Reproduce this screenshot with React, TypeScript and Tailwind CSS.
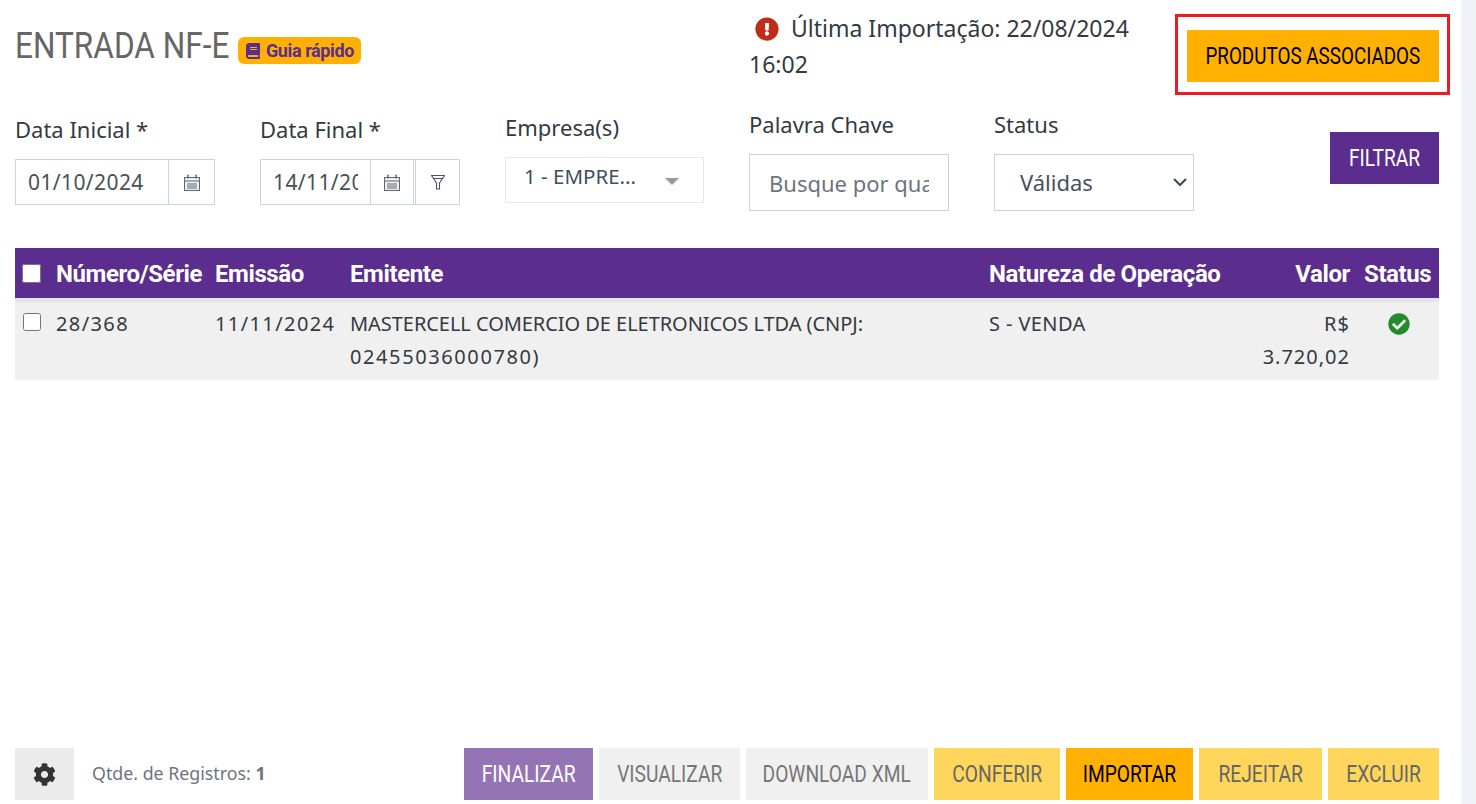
import { FaBook, FaCheckCircle, FaCog, FaExclamationCircle } from 'react-icons/fa';

const din = "font-['Roboto',sans-serif]";

function CalendarIcon() {
  return (
    <svg width="16" height="17" viewBox="0 0 16 17" fill="none" stroke="#5f6872" strokeWidth="1">
      <rect x="0.5" y="3.5" width="15" height="13" fill="#eef0f2" />
      <path d="M0.5 7h15M3 10h10M3 12h10M3 14h10" />
      <path d="M4 0.5v4M12 0.5v4" strokeWidth="1.5" />
    </svg>
  );
}

function FunnelIcon() {
  return (
    <svg width="14" height="16" viewBox="0 0 14 16" fill="none" stroke="#4b5560" strokeWidth="1.1">
      <path d="M0.5 1.5h13L8.5 9v6H5.5V9z" />
      <path d="M2.5 4.5h9" />
    </svg>
  );
}

function Label({ children }: { children: React.ReactNode }) {
  return <label className="block text-[22px] leading-[28px] text-[#333a40]">{children}</label>;
}

// texto condensado dos botoes
function Squeezed({ children }: { children: React.ReactNode }) {
  return <span className="inline-block scale-x-[0.8] whitespace-nowrap">{children}</span>;
}

function FooterButton({ children, cls }: { children: React.ReactNode; cls: string }) {
  return (
    <button className={`flex h-[52px] items-center justify-center text-[24px] ${din} ${cls}`}>
      <Squeezed>{children}</Squeezed>
    </button>
  );
}

export default function App() {
  return (
    <div className="flex h-[804px] w-[1476px] overflow-hidden bg-white font-['Noto_Sans',sans-serif]">
      <main className="flex w-[1461px] flex-col pl-[15px] pr-[11px]">
        {/* topo */}
        <div className="flex h-[96px] shrink-0 items-start">
          <div className="flex w-[734px] shrink-0 items-center gap-[9px] pt-[28px]">
            <h1 className={`w-[214px] whitespace-nowrap text-[36px] leading-[36px] text-[#666] ${din}`}>
              <span className="inline-block origin-left scale-x-[0.877]">ENTRADA NF-E</span>
            </h1>
            <span className="mt-[9px] flex h-[27px] w-[123px] items-center gap-[5px] rounded-[6px] bg-[#ffb000] pl-[7px] text-[18px] font-bold text-[#5b2d8e]">
              <FaBook size={16} />
              <span className={`tracking-[-0.4px] ${din}`}>Guia rápido</span>
            </span>
          </div>
          <div className="w-[426px] shrink-0 pt-[10px] text-[23px] leading-[36px] text-[#333a40]">
            <FaExclamationCircle className="mb-[4px] ml-[6px] mr-[12px] inline" size={24} color="#c02c18" />
            Última Importação: 22/08/2024 16:02
          </div>
          <div className="mt-[14px] shrink-0 border-[3px] border-[#ed1c24] pb-[10px] pl-[9px] pr-[8px] pt-[13px]">
            <button className={`flex h-[52px] w-[252px] items-center justify-center bg-[#ffb000] text-[24px] text-black ${din}`}>
              <span className="inline-block scale-x-[0.785] whitespace-nowrap">PRODUTOS ASSOCIADOS</span>
            </button>
          </div>
        </div>

        {/* filtros */}
        <div className="flex h-[152px] shrink-0 items-start">
          <div className="w-[245px] pt-[19px]">
            <Label>Data Inicial *</Label>
            <div className="mt-[16px] flex h-[46px] w-[200px] border border-[#cdd1d8]">
              <input readOnly value="01/10/2024" className="w-[152px] px-[12px] pt-[1px] text-[21px] tracking-[0.4px] text-[#495057] outline-none" />
              <span className="flex w-[46px] items-center justify-center border-l border-[#cdd1d8]">
                <CalendarIcon />
              </span>
            </div>
          </div>
          <div className="w-[245px] pt-[19px]">
            <Label>Data Final *</Label>
            <div className="mt-[16px] flex h-[46px] w-[200px] border border-[#cdd1d8]">
              <input readOnly value="14/11/2024" className="w-[109px] px-[12px] pt-[1px] text-[21px] tracking-[0.4px] text-[#495057] outline-none" />
              <span className="flex w-[44px] items-center justify-center border-x border-[#cdd1d8]">
                <CalendarIcon />
              </span>
              <span className="ml-[1px] flex flex-1 items-center justify-center border-l border-[#cdd1d8]">
                <FunnelIcon />
              </span>
            </div>
          </div>
          <div className="w-[244px] pt-[17px]">
            <Label>Empresa(s)</Label>
            <div className="mt-[16px] flex h-[46px] w-[199px] items-center border border-[#e6e8ea] pl-[18px] text-[20.5px] text-[#3e5060]">
              <span className="w-[140px] -translate-y-[4px]">1 - EMPRE...</span>
              <span className="ml-[1px] mt-[3px] border-x-[7px] border-t-[7px] border-x-transparent border-t-[#999]" />
            </div>
          </div>
          <div className="w-[245px] pt-[14px]">
            <Label>Palavra Chave</Label>
            <input
              placeholder="Busque por qualquer coisa"
              className="mt-[16px] h-[57px] w-[200px] border border-[#cdd1d8] px-[19px] text-[22px] outline-none placeholder:text-[#6c757d]"
            />
          </div>
          <div className="w-[336px] pt-[14px]">
            <Label>Status</Label>
            <div className="relative mt-[16px] w-[200px]">
              <select className="h-[57px] w-full appearance-none border border-[#cdd1d8] bg-white pl-[25px] text-[22px] text-[#495057] outline-none">
                <option>Válidas</option>
              </select>
              <svg className="pointer-events-none absolute right-[7px] top-[24px]" width="14" height="9" viewBox="0 0 14 9" fill="none" stroke="#3f474e" strokeWidth="2">
                <path d="M1 1l6 6 6-6" />
              </svg>
            </div>
          </div>
          <button className={`mt-[36px] flex h-[52px] w-[109px] items-center justify-center bg-[#5b2d8e] text-[24px] text-white ${din}`}>
            <Squeezed>FILTRAR</Squeezed>
          </button>
        </div>

        {/* tabela */}
        <table className="w-[1424px] shrink-0 table-fixed border-collapse text-[20px] text-[#333a40]">
          <colgroup>
            <col className="w-[41px]" />
            <col className="w-[159px]" />
            <col className="w-[135px]" />
            <col className="w-[639px]" />
            <col className="w-[262px]" />
            <col className="w-[113px]" />
            <col className="w-[75px]" />
          </colgroup>
          <thead>
            <tr className={`h-[52px] bg-[#5b2d8e] text-left text-[24px] font-bold tracking-[-0.4px] text-white ${din}`}>
              <th className="pl-[7px]"><input type="checkbox" className="block size-[19px]" /></th>
              <th className="pt-[2px] font-bold">Número/Série</th>
              <th className="pt-[2px] font-bold">Emissão</th>
              <th className="pt-[2px] font-bold">Emitente</th>
              <th className="pt-[2px] font-bold">Natureza de Operação</th>
              <th className="pr-[14px] pt-[2px] text-right font-bold">Valor</th>
              <th className="pt-[2px] font-bold">Status</th>
            </tr>
          </thead>
          <tbody>
            <tr className="h-[80px] border-t-[4px] border-[#e3e5e9] bg-[#f0f0f0] align-top leading-[33px]">
              <td className="pl-[8px] pt-[11px]"><input type="checkbox" className="block size-[18px]" /></td>
              <td className="pt-[5px] tracking-[1.4px]">28/368</td>
              <td className="pt-[5px] tracking-[1.4px]">11/11/2024</td>
              <td className="pt-[5px] tracking-[-0.05px]">MASTERCELL COMERCIO DE ELETRONICOS LTDA (CNPJ: <span className="tracking-[1.6px]">02455036000780</span>)</td>
              <td className="pt-[5px] tracking-[0.4px]">S - VENDA</td>
              <td className="pr-[14px] pt-[5px] text-right tracking-[1px]">R$ 3.720,02</td>
              <td className="pl-[24px] pt-[11px]"><FaCheckCircle size={22} color="#238b2a" /></td>
            </tr>
          </tbody>
        </table>

        {/* rodape */}
        <div className="mb-[4px] mt-auto flex w-[1424px] items-center">
          <button className="flex h-[52px] w-[59px] items-center justify-center bg-[#ebebeb]">
            <FaCog size={23} color="#333" />
          </button>
          <span className="mb-[2px] ml-[18px] text-[17.8px] text-[#6c757d]">
            Qtde. de Registros: <b>1</b>
          </span>
          <div className="ml-auto flex gap-[6px]">
            <FooterButton cls="w-[129px] bg-[#9474b5] text-white">FINALIZAR</FooterButton>
            <FooterButton cls="w-[141px] bg-[#f0f0f0] text-[#777]">VISUALIZAR</FooterButton>
            <FooterButton cls="w-[182px] bg-[#f0f0f0] text-[#777]">DOWNLOAD XML</FooterButton>
            <FooterButton cls="w-[126px] bg-[#ffd65c] text-[#666]">CONFERIR</FooterButton>
            <FooterButton cls="w-[127px] bg-[#ffb000] text-black">IMPORTAR</FooterButton>
            <FooterButton cls="w-[123px] bg-[#ffd65c] text-[#666]">REJEITAR</FooterButton>
            <FooterButton cls="w-[111px] bg-[#ffd65c] text-[#666]">EXCLUIR</FooterButton>
          </div>
        </div>
      </main>
      <div className="flex-1 bg-[#f1f2f6]" />
    </div>
  );
}
